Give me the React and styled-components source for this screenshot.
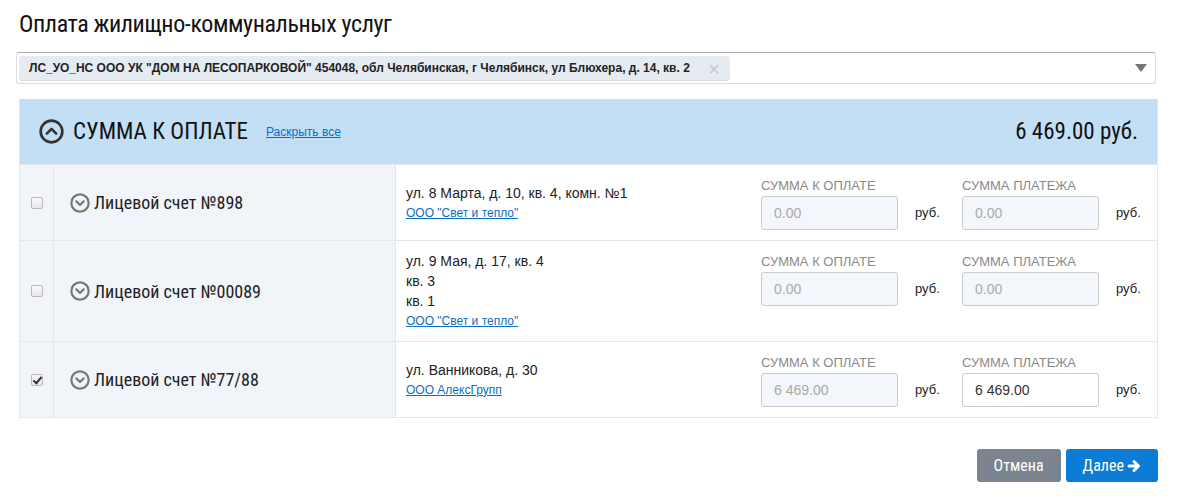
import React from 'react';
import styled, { createGlobalStyle } from 'styled-components';

const GlobalStyle = createGlobalStyle`
  body {
    margin: 0;
    background: #fff;
    font-family: "Liberation Sans", Arial, sans-serif;
    color: #222;
  }
`;

const cond = `"Roboto Condensed", "Roboto", sans-serif`;

const Page = styled.div`
  padding: 8px 33px 0 19px;
  width: 1191px;
  box-sizing: border-box;
`;

const Title = styled.h1`
  margin: 0 0 12px;
  font-family: ${cond};
  font-stretch: condensed;
  font-weight: 400;
  font-size: 24px;
  line-height: 32px;
  color: #111;
  letter-spacing: -0.4px;
`;

const Select = styled.div`
  margin-left: -3px;
  margin-right: 2px;
  height: 32px;
  border: 1px solid #ddd;
  border-top-color: #aaa;
  border-radius: 3px;
  display: flex;
  align-items: center;
  padding: 0 2px;
  box-sizing: border-box;
`;

const Tag = styled.div`
  display: flex;
  align-items: center;
  height: 25px;
  width: 711px;
  box-sizing: border-box;
  padding: 0 10px 0 10px;
  background: #e6ebf2;
  border-bottom: 1px solid #d7dde6;
  border-radius: 3px;
  font-size: 12px;
  font-weight: bold;
  color: #222;
  justify-content: space-between;
`;

const Close = styled.span`
  color: #c3c7cc;
  font-weight: normal;
  font-size: 20px;
  line-height: 1;
  margin-top: 2px;
`;

const Caret = styled.span`
  margin-left: auto;
  margin-right: 6px;
  width: 0;
  height: 0;
  border-left: 6px solid transparent;
  border-right: 6px solid transparent;
  border-top: 8px solid #777;
`;

const Panel = styled.div`
  margin-top: 15px;
  border: 1px solid #e4e8ee;
  border-top: none;
`;

const Header = styled.div`
  height: 65px;
  background: #c2dff5;
  display: flex;
  align-items: center;
  padding: 0 19px 0 19px;
`;

const HeaderTitle = styled.span`
  font-family: ${cond};
  font-stretch: condensed;
  font-size: 23px;
  color: #111;
  margin-left: 9px;
  letter-spacing: 0;
`;

const Link = styled.a`
  color: #0a6fc2;
  text-decoration: underline;
  font-size: 12px;
  cursor: pointer;
  margin-left: ${p => p.$ml || 0}px;
`;

const Total = styled.span`
  margin-left: auto;
  font-family: ${cond};
  font-stretch: condensed;
  font-size: 23px;
  color: #111;
`;

const Row = styled.div`
  display: grid;
  grid-template-columns: 34px 342px 345px 1fr;
  min-height: ${p => p.$h}px;
  border-top: 1px solid #e4e8ee;
`;

const CheckCell = styled.div`
  background: #f1f4f8;
  border-right: 1px solid #e4e8ee;
  display: flex;
  align-items: center;
  justify-content: center;
`;

const Check = styled.input`
  appearance: none;
  margin: 0;
  width: 12px;
  height: 12px;
  border: 1px solid #b9b9b9;
  border-radius: 2px;
  background: linear-gradient(#fafafa, #e6e6e6);
  position: relative;

  &:checked::after {
    content: '';
    position: absolute;
    left: 3px;
    top: 0px;
    width: 3px;
    height: 7px;
    border: solid #333;
    border-width: 0 2px 2px 0;
    transform: rotate(40deg);
  }
`;

const NameCell = styled.div`
  background: #f1f4f8;
  display: flex;
  align-items: center;
  padding-left: 16px;
  gap: 4px;
  font-family: ${cond};
  font-stretch: condensed;
  font-size: 18px;
  color: #222;
  border-right: 1px solid #e4e8ee;
`;

const AddrCell = styled.div`
  display: flex;
  flex-direction: column;
  justify-content: center;
  padding-left: 10px;
  font-size: 14px;
  line-height: 20px;
  color: #222;
`;

const AmountCell = styled.div`
  display: flex;
  align-items: flex-start;
  padding: 13px 0 0 20px;
`;

const Field = styled.div`
  display: flex;
  flex-direction: column;
  width: 137px;
`;

const Label = styled.span`
  font-size: 13px;
  color: #8a8a8a;
  line-height: 16px;
  margin-bottom: 2px;
  text-transform: uppercase;
  white-space: nowrap;
`;

const Input = styled.div`
  height: 34px;
  box-sizing: border-box;
  border: 1px solid #ccc;
  border-radius: 3px;
  background: ${p => (p.$disabled ? '#f3f6fa' : '#fff')};
  color: ${p => (p.$disabled ? '#aaa' : '#333')};
  font-size: 14px;
  padding: 0 12px;
  display: flex;
  align-items: center;
`;

const Rub = styled.span`
  font-size: 13px;
  color: #222;
  margin: 18px 20px 0 17px;
  line-height: 34px;
  width: 27px;
`;

const Footer = styled.div`
  display: flex;
  justify-content: flex-end;
  gap: 5px;
  margin-top: 31px;
`;

const Button = styled.button`
  height: 33px;
  border: none;
  border-radius: 3px;
  padding: 0 17px;
  font-family: ${cond};
  font-stretch: condensed;
  font-size: 16px;
  color: #fff;
  background: ${p => (p.$primary ? '#0c7cd5' : '#7a8590')};
  display: flex;
  align-items: center;
  gap: 3px;
  cursor: pointer;
`;

const CircleChevron = ({ size, color, up }) => (
  <svg width={size} height={size} viewBox="0 0 24 24" fill="none" stroke={color} strokeWidth="2.6" strokeLinecap="round" strokeLinejoin="round">
    <circle cx="12" cy="12" r="10.4" />
    {up ? <polyline points="7.5,14 12,9.5 16.5,14" /> : <polyline points="7.5,10 12,14.5 16.5,10" />}
  </svg>
);

const Arrow = () => (
  <svg width="14" height="14" viewBox="0 0 14 14" fill="none" stroke="#fff" strokeWidth="3" strokeLinecap="round" strokeLinejoin="round">
    <path d="M2 7h9M7 2.5L11.5 7 7 11.5" />
  </svg>
);

const rows = [
  { id: 1, name: 'Лицевой счет №898', h: 75, addr: ['ул. 8 Марта, д. 10, кв. 4, комн. №1'], org: 'ООО "Свет и тепло"', due: '0.00', pay: '0.00', checked: false },
  { id: 2, name: 'Лицевой счет №00089', h: 100, addr: ['ул. 9 Мая, д. 17, кв. 4', 'кв. 3', 'кв. 1'], org: 'ООО "Свет и тепло"', due: '0.00', pay: '0.00', checked: false },
  { id: 3, name: 'Лицевой счет №77/88', h: 75, addr: ['ул. Ванникова, д. 30'], org: 'ООО АлексГрупп', due: '6 469.00', pay: '6 469.00', checked: true },
];

const App = () => (
  <Page>
    <GlobalStyle />
    <Title>Оплата жилищно-коммунальных услуг</Title>
    <Select>
      <Tag>
        <span>ЛС_УО_НС ООО УК "ДОМ НА ЛЕСОПАРКОВОЙ" 454048, обл Челябинская, г Челябинск, ул Блюхера, д. 14, кв. 2</span>
        <Close>×</Close>
      </Tag>
      <Caret />
    </Select>
    <Panel>
      <Header>
        <CircleChevron size={25} color="#333" up />
        <HeaderTitle>СУММА К ОПЛАТЕ</HeaderTitle>
        <Link $ml={18}>Раскрыть все</Link>
        <Total>6 469.00 руб.</Total>
      </Header>
      {rows.map(r => (
        <Row key={r.id} $h={r.h}>
          <CheckCell>
            <Check type="checkbox" defaultChecked={r.checked} />
          </CheckCell>
          <NameCell>
            <CircleChevron size={20} color="#777" />
            {r.name}
          </NameCell>
          <AddrCell>
            {r.addr.map(a => <span key={a}>{a}</span>)}
            <Link>{r.org}</Link>
          </AddrCell>
          <AmountCell>
            <Field>
              <Label>Сумма к оплате</Label>
              <Input $disabled>{r.due}</Input>
            </Field>
            <Rub>руб.</Rub>
            <Field>
              <Label>Сумма платежа</Label>
              <Input $disabled={!r.checked}>{r.pay}</Input>
            </Field>
            <Rub>руб.</Rub>
          </AmountCell>
        </Row>
      ))}
    </Panel>
    <Footer>
      <Button>Отмена</Button>
      <Button $primary>Далее <Arrow /></Button>
    </Footer>
  </Page>
);

export default App;
